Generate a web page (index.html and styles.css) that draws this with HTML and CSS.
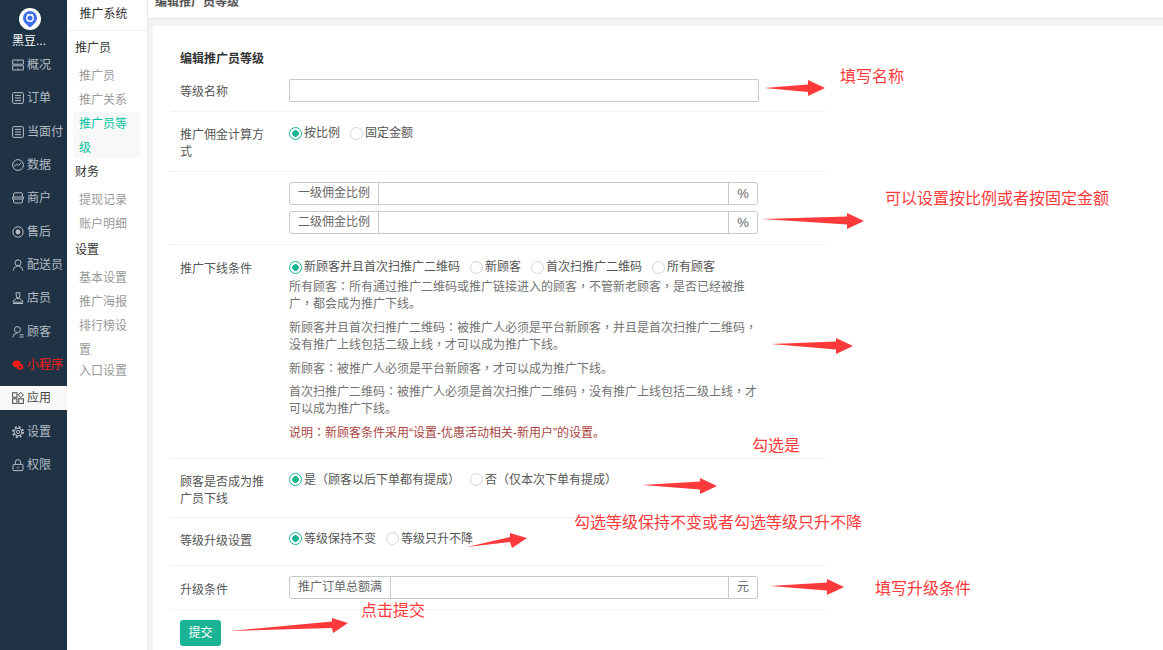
FILE: index.html
```html
<!DOCTYPE html>
<html lang="zh-CN">
<head>
<meta charset="utf-8">
<title>编辑推广员等级</title>
<link rel="stylesheet" href="styles.css">
</head>
<body>
<div class="app">
  <nav class="rail">
    <div class="brand">
      <svg class="logo" viewBox="0 0 22 22"><circle cx="11" cy="11" r="11" fill="#fff"/><path d="M11 3a7 7 0 0 0-7 7c0 4 4.200 7.200 7 9.400 2.800-2.200 7-5.400 7-9.400a7 7 0 0 0-7-7z" fill="#3f6df2"/><circle cx="11" cy="10" r="3.200" fill="none" stroke="#fff" stroke-width="1.400"/><path d="M8.600 6v2.200M13.400 6v2.200" stroke="#fff" stroke-width="1.200"/></svg>
      <span class="brand-name">黑豆...</span>
    </div>
    <a class="rail-item"><svg class="ic" viewBox="0 0 12 12"><path d="M.6 5.200V1h10.800v4.200zM.6 6.800V11h10.800V6.800zM6 1v1.600M6 9.400V11"/></svg>概况</a>
    <a class="rail-item"><svg class="ic" viewBox="0 0 12 12"><rect x=".6" y=".6" width="10.800" height="10.800" rx="1"/><path d="M3 3.400h6M3 6h6M3 8.600h6"/></svg>订单</a>
    <a class="rail-item"><svg class="ic" viewBox="0 0 12 12"><rect x=".6" y=".6" width="10.800" height="10.800" rx="1"/><path d="M3 3.400h6M3 6h6M3 8.600h6"/></svg>当面付</a>
    <a class="rail-item"><svg class="ic" viewBox="0 0 12 12"><circle cx="6" cy="6" r="5.400"/><path d="M2.400 7.600 4.600 5l1.800 1.600L9.400 3.600"/></svg>数据</a>
    <a class="rail-item"><svg class="ic" viewBox="0 0 12 12"><path d="M1.600 5V2q0-1.200 1.200-1.200h6.400q1.200 0 1.200 1.200v3M.6 5h10.800v2H.6zM1.600 7v3q0 1 1 1h6.800q1 0 1-1V7"/></svg>商户</a>
    <a class="rail-item"><svg class="ic" viewBox="0 0 12 12"><circle cx="6" cy="6" r="5.200"/><circle cx="6" cy="6" r="2.400" class="fill"/></svg>售后</a>
    <a class="rail-item"><svg class="ic" viewBox="0 0 12 12"><circle cx="6" cy="3.800" r="3"/><path d="M1 11.600q.6-4.400 5-4.800 4.400.4 5 4.800"/></svg>配送员</a>
    <a class="rail-item"><svg class="ic" viewBox="0 0 12 12"><path d="M4 .8h4l-.6 5h-2.800zM1.200 9 4.600 6.400h2.800L10.800 9v1.200H1.200zM1 11.500h10"/></svg>店员</a>
    <a class="rail-item"><svg class="ic" viewBox="0 0 12 12"><circle cx="5.400" cy="3.600" r="3"/><path d="M.8 11.400q.4-4 4.600-4.600M7.600 8.800h4M7.600 11h4"/></svg>顾客</a>
    <a class="rail-item is-red"><svg class="ic" viewBox="0 0 12 12"><ellipse cx="4.600" cy="4.800" rx="4" ry="3.400" class="fill"/><ellipse cx="8" cy="7.800" rx="3.400" ry="2.900" class="fill"/><circle cx="8" cy="7.800" r="1" class="hole"/></svg>小程序</a>
    <a class="rail-item is-active"><svg class="ic" viewBox="0 0 12 12"><rect x=".6" y=".8" width="4.400" height="4.400"/><path d="M8.800.4l2.600 2.600-2.600 2.600L6.200 3z"/><rect x=".6" y="6.800" width="4.400" height="4.600"/><rect x="6.800" y="6.800" width="4.600" height="4.600"/></svg>应用</a>
    <a class="rail-item"><svg class="ic" viewBox="0 0 12 12"><circle cx="6" cy="6" r="5" class="teeth"/><circle cx="6" cy="6" r="3.800"/><circle cx="6" cy="6" r="1.600"/></svg>设置</a>
    <a class="rail-item"><svg class="ic" viewBox="0 0 12 12"><rect x="1" y="5.400" width="10" height="6.200" rx="1"/><path d="M3.400 5.400V3.200a2.600 2.600 0 0 1 5.200 0v2.200M6 7.800v1.600"/></svg>权限</a>
  </nav>

  <aside class="sub">
    <div class="sub-title">推广系统</div>
    <div class="sub-body">
      <div class="sub-group">推广员</div>
      <a class="sub-item">推广员</a>
      <a class="sub-item">推广关系</a>
      <a class="sub-item is-wrap is-current">推广员等级</a>
      <div class="sub-group">财务</div>
      <a class="sub-item">提现记录</a>
      <a class="sub-item">账户明细</a>
      <div class="sub-group">设置</div>
      <a class="sub-item">基本设置</a>
      <a class="sub-item">推广海报</a>
      <a class="sub-item is-wrap">排行榜设置</a>
      <a class="sub-item">入口设置</a>
    </div>
  </aside>

  <main class="main">
    <header class="topbar"><span class="topbar-title">编辑推广员等级</span></header>
    <section class="card">
      <h1 class="form-title">编辑推广员等级</h1>

      <div class="row row-first">
        <div class="label">等级名称</div>
        <div class="control"><div class="field"></div></div>
      </div>

      <div class="row row-text row-method">
        <div class="label">推广佣金计算方式</div>
        <div class="control radios">
          <span class="radio on">按比例</span>
          <span class="radio">固定金额</span>
        </div>
      </div>

      <div class="row row-input">
        <div class="label"></div>
        <div class="control stack">
          <div class="group"><span class="addon addon-l">一级佣金比例</span><span class="group-field"></span><span class="addon addon-r addon-pct">%</span></div>
          <div class="group"><span class="addon addon-l">二级佣金比例</span><span class="group-field"></span><span class="addon addon-r addon-pct">%</span></div>
        </div>
      </div>

      <div class="row row-help">
        <div class="label">推广下线条件</div>
        <div class="control">
          <div class="radios">
            <span class="radio on">新顾客并且首次扫推广二维码</span>
            <span class="radio">新顾客</span>
            <span class="radio">首次扫推广二维码</span>
            <span class="radio">所有顾客</span>
          </div>
          <p class="help">所有顾客<span class="pn">：</span>所有通过推广二维码或推广链接进入的顾客<span class="pn">，</span>不管新老顾客<span class="pn">，</span>是否已经被推广<span class="pn">，</span>都会成为推广下线。</p>
          <p class="help">新顾客并且首次扫推广二维码<span class="pn">：</span>被推广人必须是平台新顾客<span class="pn">，</span>并且是首次扫推广二维码<span class="pn">，</span>没有推广上线包括二级上线<span class="pn">，</span>才可以成为推广下线。</p>
          <p class="help">新顾客<span class="pn">：</span>被推广人必须是平台新顾客<span class="pn">，</span>才可以成为推广下线。</p>
          <p class="help">首次扫推广二维码<span class="pn">：</span>被推广人必须是首次扫推广二维码<span class="pn">，</span>没有推广上线包括二级上线<span class="pn">，</span>才可以成为推广下线。</p>
          <p class="help help-red">说明<span class="pn">：</span>新顾客条件采用“设置-优惠活动相关-新用户”的设置。</p>
        </div>
      </div>

      <div class="row row-text">
        <div class="label">顾客是否成为推广员下线</div>
        <div class="control radios">
          <span class="radio on"><span>是<span class="pn">（</span>顾客以后下单都有提成<span class="pn">）</span></span></span>
          <span class="radio"><span>否<span class="pn">（</span>仅本次下单有提成<span class="pn">）</span></span></span>
        </div>
      </div>

      <div class="row row-text row-single">
        <div class="label">等级升级设置</div>
        <div class="control radios">
          <span class="radio on">等级保持不变</span>
          <span class="radio">等级只升不降</span>
        </div>
      </div>

      <div class="row row-input row-last">
        <div class="label label-mid">升级条件</div>
        <div class="control">
          <div class="group"><span class="addon addon-l addon-wide">推广订单总额满</span><span class="group-field"></span><span class="addon addon-r">元</span></div>
        </div>
      </div>

      <button class="submit" type="button">提交</button>
    </section>
  </main>

  <svg class="arrows" viewBox="0 0 1163 650" aria-hidden="true">
    <polygon points="764,88 808,84.500 808,80 825,88 808,96 808,92"/>
    <polygon points="761,219 847,216.500 847,213 864,221 847,229 847,224.500"/>
    <polygon points="771,344 836,341.500 836,338 853,346 836,354 836,349.500"/>
    <polygon points="642,485 700,481.500 700,478 717,486 700,494 700,489.500"/>
    <polygon points="467,547 510,537 510,533 527,538 512,548 510,542"/>
    <polygon points="770,586 827,582.500 827,579 844,587 827,595 827,590.500"/>
    <polygon points="230,631 332,621.500 332,618 348,623 333,633 332,628"/>
  </svg>
  <span class="note note-1">填写名称</span>
  <span class="note note-2">可以设置按比例或者按固定金额</span>
  <span class="note note-3">勾选是</span>
  <span class="note note-4">勾选等级保持不变或者勾选等级只升不降</span>
  <span class="note note-5">填写升级条件</span>
  <span class="note note-6">点击提交</span>
</div>
</body>
</html>
```

FILE: styles.css
```css
* { box-sizing: border-box; }
html, body { margin: 0; height: 100%; overflow: hidden; }
body {
  font-family: "Liberation Sans", "Noto Sans CJK SC", sans-serif;
  font-size: 12px;
  line-height: 17px;
  color: #676a6c;
  background: #f3f3f4;
}
.app { position: relative; display: flex; width: 1163px; height: 650px; overflow: hidden; }

/* dark rail */
.rail { width: 67px; flex: none; background: #1f3344; display: flex; flex-direction: column; gap: 9.33px; }
.brand { height: 43.67px; flex: none; display: flex; flex-direction: column; padding: 8px 0 0 19px; }
.logo { width: 22px; height: 22px; flex: none; display: block; }
.brand-name { color: #fff; line-height: 14px; margin: 4px 0 0 -7px; }
.rail-item {
  height: 24px; flex: none; display: flex; align-items: center; gap: 3px;
  padding-left: 12px; color: #b4bcc4; white-space: nowrap; line-height: 24px;
}
.ic { width: 12px; height: 12px; flex: none; fill: none; stroke: currentColor; stroke-width: 1; overflow: visible; }
.ic .fill { fill: currentColor; stroke: none; }
.ic .hole { fill: #1f3344; stroke: none; }
.ic .teeth { stroke-width: 2; stroke-dasharray: 2 1.930; }
.rail-item.is-red { color: #ff1a1a; }
.rail-item.is-active { background: #f8f8f8; color: #444; }

/* secondary menu */
.sub { width: 81px; flex: none; background: #fff; border-right: 1px solid #e8e8e8; }
.sub-title { height: 31px; border-bottom: 1px solid #f0f0f0; padding-right: 7px; text-align: center; line-height: 29px; color: #333; }
.sub-body { padding: 5px 7px 0 6px; }
.sub-group { line-height: 24px; color: #333; padding-left: 2px; margin-bottom: 4px; }
.sub-item { display: block; line-height: 24px; padding: 0 8px 0 6px; color: #999; }
.sub-item + .sub-group { margin-top: 2px; }
.sub-item.is-wrap { height: 45px; }
.sub-item.is-current { height: 46px; background: #f8f8f8; color: #00c5a1; }

/* main column */
.main { flex: 1; min-width: 0; display: flex; flex-direction: column; }
.topbar { height: 19px; flex: none; background: #fff; border-bottom: 1px solid #e7e7e7; padding-left: 7px; overflow: hidden; }
.topbar-title { display: block; margin-top: -6px; color: #555; font-weight: bold; }
.card { flex: 1; margin: 7px 0 0 5px; background: #fff; padding: 25px 338px 0 17px; }
.form-title { margin: 0 0 10px 10px; font-size: 12px; line-height: 17px; font-weight: bold; color: #333; }

.row { display: flex; border-bottom: 1px solid #f0f2f2; }
.label { width: 90px; margin: 0 19px 0 10px; padding-top: 1px; color: #555; flex: none; }
.control { width: 470px; flex: none; }
.row-first { padding: 1px 0 9px; }
.row-first .label { padding-top: 5px; }
.row-text { padding: 14px 0 9px; }
.row-method { padding-bottom: 10px; }
.row-single { padding-bottom: 15px; }
.row-input { padding: 10px 0; }
.row-help { padding: 14px 0 9px; }
.row-help .label { padding-top: 2px; }
.row-last .label { padding-top: 6px; }

.field { height: 23px; border: 1px solid #c8c8c8; border-radius: 2px; background: #fff; }
.stack { display: flex; flex-direction: column; gap: 6px; }
.group { display: flex; width: 469px; height: 23px; border: 1px solid #c8c8c8; border-radius: 3px; }
.addon { display: flex; align-items: center; justify-content: center; flex: none; color: #666; }
.addon-l { width: 89px; border-right: 1px solid #c8c8c8; }
.addon-wide { width: 101px; }
.addon-r { width: 29px; border-left: 1px solid #c8c8c8; }
.addon-pct { font-size: 13px; }
.group-field { flex: 1; }

.radios { display: flex; align-items: flex-start; gap: 10px; line-height: 17px; }
.control.radios { margin-top: -1px; }
.radio { display: flex; align-items: center; color: #555; white-space: nowrap; }
.radio::before {
  content: ""; width: 11px; height: 11px; border-radius: 50%;
  border: 1px solid #d5d5d5; background: #fff; flex: none; margin: -1px 2px 0 0;
}
.radio.on::before { border-color: #1ab394; background: radial-gradient(circle, #1ab394 0 3px, #fff 3.5px); }
.pn { font-family: "Noto Sans CJK TC", sans-serif; font-feature-settings: "locl" 0; line-height: 1; }

.help { margin: 0 0 6.8px; line-height: 17px; color: #737373; }
.radios + .help { margin-top: 3px; }
.help-red { color: #a94442; }

.submit {
  display: block; width: 41px; height: 26px; margin: 10px 0 0 10px; padding: 0;
  border: 0; border-radius: 3px; background: #1ab394; color: #fff;
  font: inherit; line-height: 26px;
}

/* hand-drawn annotations lying over the form */
.arrows { position: absolute; inset: 0; width: 1163px; height: 650px; fill: #ff3a3a; pointer-events: none; }
.note { position: absolute; font-size: 16px; line-height: 22px; color: #ff3a3a; white-space: nowrap; }
.note-1 { left: 840px; top: 66px; }
.note-2 { left: 885px; top: 188px; }
.note-3 { left: 752px; top: 435px; }
.note-4 { left: 574px; top: 512px; }
.note-5 { left: 875px; top: 578px; }
.note-6 { left: 361px; top: 600px; }
```
